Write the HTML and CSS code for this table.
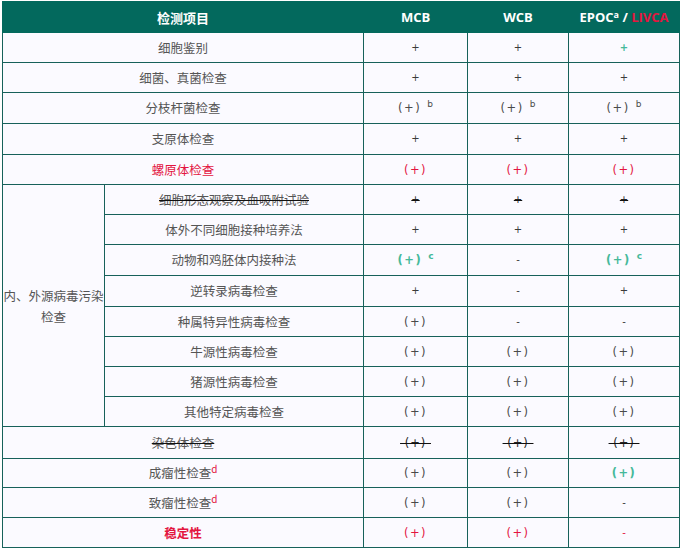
FILE: index.html
```html
<!DOCTYPE html>
<html lang="zh-CN">
<head>
<meta charset="utf-8">
<title>检测项目</title>
<link rel="stylesheet" href="styles.css">
</head>
<body>
<table class="tbl">
  <colgroup>
    <col class="c1"><col class="c2"><col class="c3"><col class="c4"><col class="c5">
  </colgroup>
  <thead>
    <tr class="hd">
      <th colspan="2">检测项目</th>
      <th>MCB</th>
      <th>WCB</th>
      <th>EPOC<sup class="sa">a</sup> / <span class="red">LIVCA</span></th>
    </tr>
  </thead>
  <tbody>
    <tr class="h30"><td colspan="2" class="nm">细胞鉴别</td><td class="p">+</td><td class="p">+</td><td class="p grn">+</td></tr>
    <tr class="h30"><td colspan="2" class="nm">细菌、真菌检查</td><td class="p">+</td><td class="p">+</td><td class="p">+</td></tr>
    <tr class="h31"><td colspan="2" class="nm">分枝杆菌检查</td><td class="v">(+)<sup class="sp">b</sup></td><td class="v">(+)<sup class="sp">b</sup></td><td class="v">(+)<sup class="sp">b</sup></td></tr>
    <tr class="h31"><td colspan="2" class="nm">支原体检查</td><td class="p">+</td><td class="p">+</td><td class="p">+</td></tr>
    <tr class="h30"><td colspan="2" class="nm red">螺原体检查</td><td class="v red">(+)</td><td class="v red">(+)</td><td class="v red">(+)</td></tr>
    <tr class="h30">
      <td rowspan="8" class="grp">内、外源病毒污染检查</td>
      <td class="nm"><s class="st">细胞形态观察及血吸附试验</s></td>
      <td class="p dk"><s class="st">+</s></td><td class="p dk"><s class="st">+</s></td><td class="p dk"><s class="st">+</s></td>
    </tr>
    <tr class="h30"><td class="nm">体外不同细胞接种培养法</td><td class="p">+</td><td class="p">+</td><td class="p">+</td></tr>
    <tr class="h31"><td class="nm">动物和鸡胚体内接种法</td><td class="v grn">(+)<sup class="sp">c</sup></td><td class="p">-</td><td class="v grn">(+)<sup class="sp">c</sup></td></tr>
    <tr class="h31"><td class="nm">逆转录病毒检查</td><td class="p">+</td><td class="p">-</td><td class="p">+</td></tr>
    <tr class="h30"><td class="nm">种属特异性病毒检查</td><td class="v">(+)</td><td class="p">-</td><td class="p">-</td></tr>
    <tr class="h30"><td class="nm">牛源性病毒检查</td><td class="v">(+)</td><td class="v">(+)</td><td class="v">(+)</td></tr>
    <tr class="h30"><td class="nm">猪源性病毒检查</td><td class="v">(+)</td><td class="v">(+)</td><td class="v">(+)</td></tr>
    <tr class="h30"><td class="nm">其他特定病毒检查</td><td class="v">(+)</td><td class="v">(+)</td><td class="v">(+)</td></tr>
    <tr class="h32"><td colspan="2" class="nm"><s class="st">染色体检查</s></td><td class="v dk"><s class="st wide">&nbsp;(+)&nbsp;</s></td><td class="v dk"><s class="st wide">&nbsp;(+)&nbsp;</s></td><td class="v dk"><s class="st wide">&nbsp;(+)&nbsp;</s></td></tr>
    <tr class="h29"><td colspan="2" class="nm">成瘤性检查<sup class="sd">d</sup></td><td class="v">(+)</td><td class="v">(+)</td><td class="v grn">(+)</td></tr>
    <tr class="h30"><td colspan="2" class="nm">致瘤性检查<sup class="sd">d</sup></td><td class="v">(+)</td><td class="v">(+)</td><td class="p">-</td></tr>
    <tr class="h30"><td colspan="2" class="nm red bold">稳定性</td><td class="v red">(+)</td><td class="v red">(+)</td><td class="p red">-</td></tr>
  </tbody>
</table>
</body>
</html>
```

FILE: styles.css
```css
html, body {
  margin: 0;
  padding: 0;
  background: #ffffff;
}
body {
  padding: 1px 0 0 2px;
  font-family: "Open Sans", "Noto Sans CJK SC", sans-serif;
  color: #555555;
}
.tbl {
  border-collapse: collapse;
  table-layout: fixed;
  width: 677px;
  background: #fbfaff;
}
.c1 { width: 102px; }
.c2 { width: 259px; }
.c3 { width: 104px; }
.c4 { width: 101px; }
.c5 { width: 111px; }

.tbl td {
  border: 1px solid #17615a;
  text-align: center;
  vertical-align: middle;
  padding: 0;
  font-size: 12.5px;
  line-height: 16px;
}
.hd th {
  height: 30px;
  background: #03695d;
  color: #ffffff;
  font-weight: 700;
  font-size: 13px;
  border: 1px solid #03695d;
  border-left-color: #6fa8a0;
  padding: 0;
  text-align: center;
  vertical-align: middle;
  font-family: "Open Sans", "Noto Sans CJK SC", sans-serif;
}
.hd th:first-child { border-left-color: #03695d; }
.sa {
  font-size: 9px;
  vertical-align: 4px;
  line-height: 0;
}
.h29 { height: 29px; }
.h30 { height: 30px; }
.h31 { height: 31px; }
.h32 { height: 32px; }

.nm {
  font-family: "Noto Sans CJK SC", sans-serif;
  color: #555555;
}
.grp {
  font-family: "Noto Sans CJK SC", sans-serif;
  color: #555555;
  line-height: 21px !important;
  padding: 0 !important;
}
.p {
  font-size: 10px !important;
  color: #3a3a3a;
  font-family: "DejaVu Sans", sans-serif;
}
.v {
  font-size: 11.5px !important;
  letter-spacing: 1.5px;
  color: #4a4a4a;
  font-family: "DejaVu Sans", sans-serif;
}
.sp {
  font-size: 9px;
  vertical-align: 5px;
  line-height: 0;
  margin-left: 6px;
  letter-spacing: 0;
}
.sd {
  font-size: 10px;
  vertical-align: 5px;
  line-height: 0;
  color: #e3153f;
}
.red { color: #e3153f !important; }
.grn { color: #45b99a !important; font-weight: 600; }
.bold { font-weight: 700; }
.dk { color: #222222 !important; }
.st {
  text-decoration: line-through;
  text-decoration-color: #111111;
  text-decoration-thickness: 1px;
}
.wide {
  letter-spacing: 1px;
}
```
